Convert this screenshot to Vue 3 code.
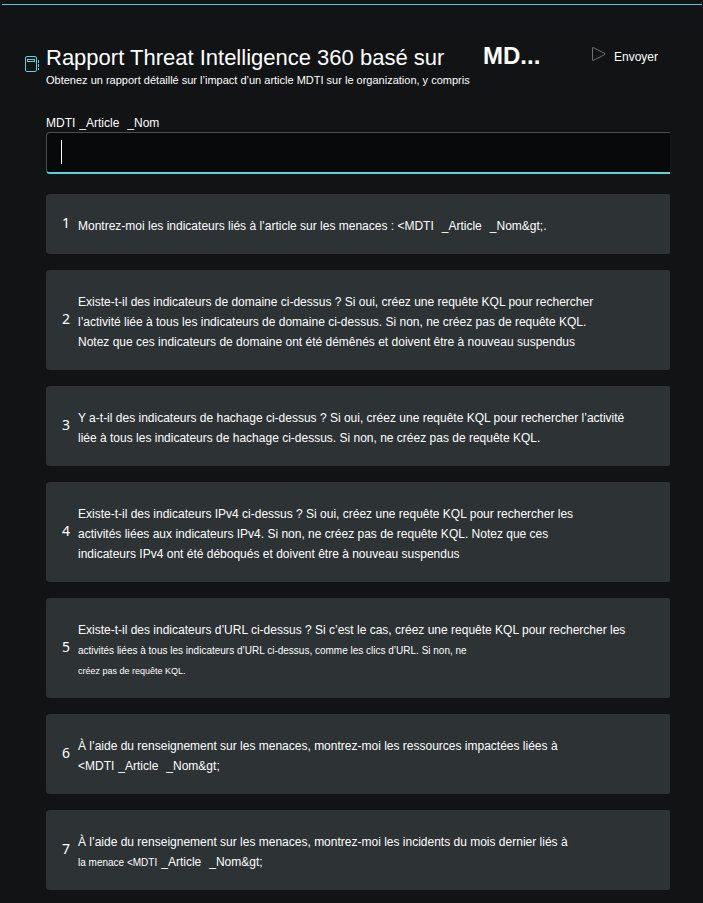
<template>
  <main class="promptbook">
    <header class="header">
      <svg class="book-icon" width="15" height="17" viewBox="0 0 15 17" fill="none" stroke="#5cd6dc">
        <rect x="0.5" y="0.5" width="11" height="15" rx="1.5" />
        <rect x="2.5" y="3.5" width="7" height="2" />
        <path d="M13.5 4v3M13.5 8v3M13.5 12v2" />
      </svg>
      <div class="heading">
        <h1>Rapport Threat Intelligence 360 basé sur</h1>
        <p>Obtenez un rapport détaillé sur l’impact d’un article MDTI sur le organization, y compris</p>
      </div>
      <strong class="suffix">MD...</strong>
      <button type="button" class="send">
        <svg width="14" height="16" viewBox="0 0 14 16" fill="none" stroke="#6b7074">
          <path d="M0.5 2v12q0 .8 .8 .4L13 8.4q.6-.4 0-.8L1.300 1.600Q.5 1.200 .5 2z" />
        </svg>
        <span>Envoyer</span>
      </button>
    </header>

    <section class="content">
      <label for="article-name" class="label">
        <span>MDTI</span><span class="gap-s">_Article</span><span class="gap-m">_Nom</span>
      </label>
      <div class="field">
        <input id="article-name" v-model="articleName" type="text" autocomplete="off" />
        <span v-if="!articleName" class="caret"></span>
      </div>

      <ol class="prompts">
        <li v-for="(prompt, index) in prompts" :key="index" class="prompt">
          <span class="number">{{ index + 1 }}</span>
          <div class="text">
            <p v-for="(line, i) in prompt" :key="i">
              <span v-for="(part, j) in line" :key="j" :class="part.style">{{ part.text }}</span>
            </p>
          </div>
        </li>
      </ol>
    </section>
  </main>
</template>

<script setup>
import { ref } from 'vue'

const articleName = ref('')

const t = (text, style = '') => ({ text, style })

const prompts = [
  [
    [
      t('Montrez-moi les indicateurs liés à l’article sur les menaces : <MDTI'),
      t('_Article', 'gap-m'),
      t('_Nom&gt;.', 'gap-m')
    ]
  ],
  [
    [t('Existe-t-il des indicateurs de domaine ci-dessus ? Si oui, créez une requête KQL pour rechercher')],
    [t('l’activité liée à tous les indicateurs de domaine ci-dessus. Si non, ne créez pas de requête KQL.')],
    [t('Notez que ces indicateurs de domaine ont été démênés et doivent être à nouveau suspendus')]
  ],
  [
    [t('Y a-t-il des indicateurs de hachage ci-dessus ? Si oui, créez une requête KQL pour rechercher l’activité')],
    [t('liée à tous les indicateurs de hachage ci-dessus. Si non, ne créez pas de requête KQL.')]
  ],
  [
    [t('Existe-t-il des indicateurs IPv4 ci-dessus ? Si oui, créez une requête KQL pour rechercher les')],
    [t('activités liées aux indicateurs IPv4. Si non, ne créez pas de requête KQL. Notez que ces')],
    [t('indicateurs IPv4 ont été déboqués et doivent être à nouveau suspendus')]
  ],
  [
    [t('Existe-t-il des indicateurs d’URL ci-dessus ? Si c’est le cas, créez une requête KQL pour rechercher les')],
    [t('activités liées à tous les indicateurs d’URL ci-dessus, comme les clics d’URL. Si non, ne', 'small')],
    [t('créez pas de requête KQL.', 'tiny')]
  ],
  [
    [t('À l’aide du renseignement sur les menaces, montrez-moi les ressources impactées liées à')],
    [t('<MDTI'), t('_Article', 'gap-s'), t('_Nom&gt;', 'gap-m')]
  ],
  [
    [t('À l’aide du renseignement sur les menaces, montrez-moi les incidents du mois dernier liés à')],
    [t('la menace <MDTI', 'small'), t('_Article', 'gap-s'), t('_Nom&gt;', 'gap-m')]
  ]
]
</script>

<style>
body {
  margin: 0;
  background: #121315;
}
</style>

<style scoped>
.promptbook {
  margin: 4px 1px 0 2px;
  border-top: 1px solid #4fc8cf;
  color: #fff;
  font-family: "Liberation Sans", Arial, sans-serif;
  font-size: 12px;
}

.header {
  display: flex;
  align-items: flex-start;
  padding: 39px 32px 0 23px;
}

.book-icon {
  flex: none;
  margin: 12px 6px 0 0;
}

.heading {
  white-space: nowrap;
  width: 437px;
}

h1 {
  margin: 0;
  font-size: 22px;
  font-weight: 400;
  line-height: 28px;
}

.heading p {
  margin: 0;
  font-size: 11px;
  line-height: 16px;
}

.suffix {
  font-size: 24px;
  line-height: 24px;
}

.send {
  display: flex;
  align-items: flex-start;
  gap: 8px;
  margin: 2px 12px 0 auto;
  padding: 0;
  border: 0;
  background: none;
  color: inherit;
  font: inherit;
  line-height: 22px;
  cursor: pointer;
}

.content {
  padding: 27px 32px 12px 44px;
}

.label {
  display: block;
  line-height: 16px;
  padding-bottom: 1px;
}

.field {
  position: relative;
}

.field input {
  display: block;
  box-sizing: border-box;
  width: 100%;
  height: 42px;
  padding: 0 14px;
  border: 1px solid #4a4f55;
  border-right: 0;
  border-bottom: 2px solid #5cd3d9;
  border-radius: 4px 0 0 4px;
  outline: none;
  background: #08090b;
  color: inherit;
  font: inherit;
}

.caret {
  position: absolute;
  left: 15px;
  top: 8px;
  width: 1px;
  height: 24px;
  background: #fff;
  pointer-events: none;
}

.prompts {
  display: flex;
  flex-direction: column;
  gap: 16px;
  margin: 20px 0 0;
  padding: 0;
  list-style: none;
}

.prompt {
  display: flex;
  align-items: center;
  background: #2d3235;
  border-radius: 4px 2px 2px 4px;
}

.number {
  width: 32px;
  flex: none;
  box-sizing: border-box;
  padding: 0 0 2px 16px;
  font-family: "Noto Sans", sans-serif;
  font-size: 14px;
  line-height: 20px;
}

.text {
  padding: 22px 0 18px;
  white-space: nowrap;
}

.text p {
  margin: 0;
  height: 20px;
  line-height: 20px;
}

.small {
  font-size: 10px;
}

.tiny {
  font-size: 9px;
}

.gap-s {
  margin-left: 4px;
}

.gap-m {
  margin-left: 8px;
}
</style>
